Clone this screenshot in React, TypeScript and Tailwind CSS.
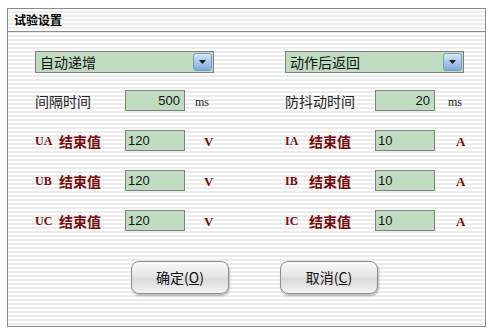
import React from "react";

const stripes =
  "bg-[repeating-linear-gradient(to_bottom,#ffffff_0px,#ffffff_2px,#ebebeb_2px,#ebebeb_4px)]";

const Combo = ({ text }: { text: string }) => (
  <div className="flex items-center w-[179px] h-[22px] bg-[#c0dcc0] border border-[#7f7f7f] pl-[4px] pr-[1px]">
    <span className="flex-1 text-[14px] leading-none text-[#111]">{text}</span>
    <div className="flex items-center justify-center w-[19px] h-[18px] rounded-[3px] border border-[#7b9ebd] bg-[linear-gradient(to_bottom,#d6e6f7,#a9c8ee_50%,#7fa9de)]">
      <svg width="7" height="4" viewBox="0 0 7 4">
        <path d="M0 0H7L3.5 4Z" fill="#1a1a1a" />
      </svg>
    </div>
  </div>
);

const Field = ({ value, right }: { value: string; right?: boolean }) => (
  <div
    className={`flex items-center w-[60px] h-[21px] bg-[#c0dcc0] border border-[#7f7f7f] px-[2px] text-[13px] font-normal leading-none text-[#111] font-['Liberation_Sans',sans-serif] ${
      right ? "justify-end pr-[4px]" : "justify-start"
    }`}
  >
    {value}
  </div>
);

const Plain = ({ label, value, unit, unitW }: { label: string; value: string; unit: string; unitW: string }) => (
  <div className="flex items-center h-[21px]">
    <span className="w-[90px] text-[14px] leading-none text-[#222]">{label}</span>
    <Field value={value} right />
    <span className={`${unitW} text-[12px] font-['Liberation_Serif',serif] text-[#222] pt-[3px]`}>{unit}</span>
  </div>
);

const Limit = ({ ch, value, unit, unitW }: { ch: string; value: string; unit: string; unitW: string }) => (
  <div className="flex items-center h-[21px] text-[#7a0a0a] font-bold">
    <span className="w-[90px] flex items-center leading-none">
      <span className="w-[24px] text-[12px] font-['Liberation_Serif',serif] pt-[1px]">{ch}</span>
      <span className="text-[14px]">结束值</span>
    </span>
    <Field value={value} />
    <span className={`${unitW} text-[13px] font-['Liberation_Serif',serif] pt-[2px]`}>{unit}</span>
  </div>
);

const Btn = ({ label, k }: { label: string; k: string }) => (
  <button className="w-[98px] h-[33px] rounded-[8px] border border-[#8d8d8d] bg-[linear-gradient(to_bottom,#fafafa,#e6e6e6_45%,#d9d9d9_55%,#f4f4f4)] shadow-[1px_2px_2px_rgba(0,0,0,0.25)] text-[14px] text-[#111] flex items-center justify-center">
    {label}(<span className="underline">{k}</span>)
  </button>
);

export default function App() {
  return (
    <div className="w-[491px] h-[330px] bg-white pt-[8px] pl-[7px] font-['Noto_Sans_CJK_SC',sans-serif]">
      <div className={`w-[479px] h-[319px] border border-[#8a8a8a] ${stripes} flex flex-col`}>
        <div className="h-[23px] border-b border-[#8a8a8a] flex items-center pl-[6px] bg-[repeating-linear-gradient(to_bottom,#fdfdfd_0px,#fdfdfd_2px,#ededed_2px,#ededed_4px)]">
          <span className="text-[12px] font-bold text-black leading-none">试验设置</span>
        </div>
        <div className="flex pl-[27px] pt-[19px]">
          <div className="w-[250px] flex flex-col">
            <Combo text="自动递增" />
            <div className="mt-[17px] flex flex-col gap-[19px]">
              <Plain label="间隔时间" value="500" unit="ms" unitW="pl-[10px]" />
              <Limit ch="UA" value="120" unit="V" unitW="pl-[19px]" />
              <Limit ch="UB" value="120" unit="V" unitW="pl-[19px]" />
              <Limit ch="UC" value="120" unit="V" unitW="pl-[19px]" />
            </div>
          </div>
          <div className="w-[200px] flex flex-col">
            <Combo text="动作后返回" />
            <div className="mt-[17px] flex flex-col gap-[19px]">
              <Plain label="防抖动时间" value="20" unit="ms" unitW="pl-[13px]" />
              <Limit ch="IA" value="10" unit="A" unitW="pl-[21px]" />
              <Limit ch="IB" value="10" unit="A" unitW="pl-[21px]" />
              <Limit ch="IC" value="10" unit="A" unitW="pl-[21px]" />
            </div>
          </div>
        </div>
        <div className="flex pl-[123px] gap-[51px] mt-[30px]">
          <Btn label="确定" k="O" />
          <Btn label="取消" k="C" />
        </div>
      </div>
    </div>
  );
}
